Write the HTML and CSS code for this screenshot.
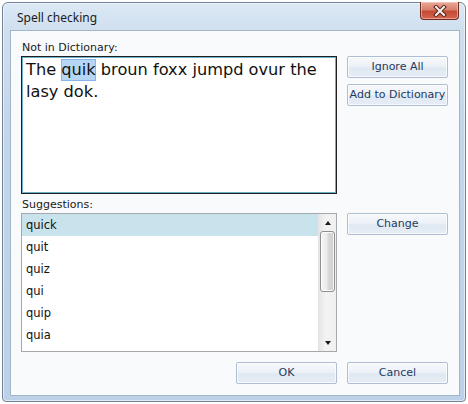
FILE: index.html
```html
<!DOCTYPE html>
<html>
<head>
<meta charset="utf-8">
<link rel="stylesheet" href="styles.css">
</head>
<body>
<div class="window">
  <div class="titlebar">
    <span class="title">Spell checking</span>
    <button class="close" aria-label="Close">
      <svg width="16" height="12" viewBox="0 0 16 12">
        <path d="M4 2 L12 10 M12 2 L4 10" stroke="#5a2418" stroke-width="4" stroke-linecap="square" fill="none"/>
        <path d="M4 2 L12 10 M12 2 L4 10" stroke="#f4f1f0" stroke-width="2" stroke-linecap="square" fill="none"/>
      </svg>
    </button>
  </div>
  <div class="client">
    <div class="grid">
      <div class="label r1">Not in Dictionary:</div>
      <div class="textbox r2"><span>The </span><span class="hl">quik</span><span> broun foxx jumpd ovur the </span><span>lasy dok.</span></div>
      <div class="side r2">
        <button class="btn">Ignore All</button>
        <button class="btn">Add to Dictionary</button>
      </div>
      <div class="label r3">Suggestions:</div>
      <div class="listbox r4">
        <ul class="items">
          <li class="item sel">quick</li>
          <li class="item">quit</li>
          <li class="item">quiz</li>
          <li class="item">qui</li>
          <li class="item">quip</li>
          <li class="item">quia</li>
        </ul>
        <div class="scroll">
          <div class="arrow up"></div>
          <div class="track"><div class="thumb"></div></div>
          <div class="arrow down"></div>
        </div>
      </div>
      <div class="side r4">
        <button class="btn">Change</button>
      </div>
    </div>
    <div class="footer">
      <button class="btn">OK</button>
      <button class="btn">Cancel</button>
    </div>
  </div>
</div>
</body>
</html>
```

FILE: styles.css
```css
html, body {
  margin: 0;
  padding: 0;
  background: #ffffff;
}
body {
  font-family: "DejaVu Sans", sans-serif;
}
.window {
  box-sizing: border-box;
  margin: 2px 0 0 2px;
  width: 464px;
  height: 400px;
  border: 1px solid #6f849a;
  border-radius: 6px 6px 4px 4px;
  background: linear-gradient(to bottom, #dce9f5 0px, #cfdfee 28px, #c3d6ea 120px, #bcd1e7 400px);
  padding: 0 5px 5px 7px;
  box-shadow: inset 0 0 0 1px rgba(255,255,255,0.55);
  display: flex;
  flex-direction: column;
}
.titlebar {
  height: 27px;
  display: flex;
  align-items: flex-start;
  justify-content: space-between;
}
.title {
  font-family: "Noto Sans", "Open Sans", sans-serif;
  font-size: 12px;
  color: #1b1b1b;
  margin: 7px 0 0 7px;
  line-height: 16px;
}
.close {
  width: 39px;
  height: 18px;
  margin: -1px 1px 0 0;
  padding: 0;
  border: 1px solid #6e2b20;
  border-top: none;
  border-radius: 0 0 4px 4px;
  background: linear-gradient(to bottom, #e9a898 0%, #d9806c 45%, #c54a35 55%, #d4664f 100%);
  box-shadow: inset 0 0 0 1px rgba(255,220,210,0.5);
  display: flex;
  align-items: center;
  justify-content: center;
}
.client {
  box-sizing: border-box;
  width: 450px;
  height: 366px;
  border: 1px solid #a3b6c9;
  background: #f9fafb;
  padding: 9px 11px 11px 10px;
  display: flex;
  flex-direction: column;
}
.grid {
  display: grid;
  grid-template-columns: 316px 101px;
  grid-template-rows: 16px 138px 19px 139px;
  column-gap: 10px;
}
.r1 { grid-row: 1; grid-column: 1; }
.r2.textbox { grid-row: 2; grid-column: 1; }
.r2.side { grid-row: 2; grid-column: 2; }
.r3 { grid-row: 3; grid-column: 1; }
.r4.listbox { grid-row: 4; grid-column: 1; }
.r4.side { grid-row: 4; grid-column: 2; }
.label {
  font-size: 11px;
  color: #1a1a1a;
  line-height: 16px;
  padding-left: 1px;
}
.r3.label {
  line-height: 19px;
  padding-top: 1px;
}
.textbox {
  box-sizing: border-box;
  border: 1px solid #1f1f1f;
  box-shadow: inset 0 0 0 1px #6fb0cb;
  background: #ffffff;
  padding: 2px 3px 2px 4px;
  font-size: 16.2px;
  line-height: 22px;
  color: #111111;
}
.hl {
  background: #b7d6f6;
  box-shadow: inset 0 0 0 1px #86b6e6;
  display: inline-block;
  line-height: 22px;
}
.side {
  display: flex;
  flex-direction: column;
  gap: 6px;
}
.btn {
  box-sizing: border-box;
  width: 101px;
  height: 22px;
  padding: 0;
  border: 1px solid #aebfd3;
  border-radius: 2px;
  background: linear-gradient(to bottom, #f6f8fb 0%, #edf2f8 45%, #dfe8f2 55%, #e6edf5 100%);
  box-shadow: inset 0 0 0 1px rgba(255,255,255,0.7);
  font-family: "DejaVu Sans", sans-serif;
  font-size: 11px;
  color: #1f3a5c;
  line-height: 20px;
}
.listbox {
  box-sizing: border-box;
  border: 1px solid #a5a9ad;
  background: #ffffff;
  display: flex;
}
.items {
  list-style: none;
  margin: 0;
  padding: 0;
  flex: 1;
}
.item {
  height: 22px;
  line-height: 22px;
  font-size: 11.5px;
  color: #111111;
  padding-left: 4px;
}
.item.sel {
  background: #c9e3ec;
}
.scroll {
  width: 17px;
  display: flex;
  flex-direction: column;
  background: linear-gradient(to right, #e6e6e6, #f3f3f3 40%, #f0f0f0);
  border-left: 1px solid #e3e3e3;
}
.arrow {
  height: 17px;
  display: flex;
  align-items: center;
  justify-content: center;
}
.arrow::after {
  content: "";
  width: 0;
  height: 0;
  border-left: 3.5px solid transparent;
  border-right: 3.5px solid transparent;
}
.arrow.up::after {
  border-bottom: 4px solid #1a1a1a;
}
.arrow.down::after {
  border-top: 4px solid #1a1a1a;
}
.track {
  flex: 1;
  padding: 0 1px;
}
.thumb {
  box-sizing: border-box;
  height: 61px;
  border: 1px solid #8e8f91;
  border-radius: 3px;
  background: linear-gradient(to right, #f5f5f5, #ebebeb 45%, #d9d9d9 55%, #cfcfcf);
  box-shadow: inset 0 0 0 1px rgba(255,255,255,0.8);
}
.footer {
  margin-top: 10px;
  display: flex;
  justify-content: flex-end;
  gap: 10px;
}
```
